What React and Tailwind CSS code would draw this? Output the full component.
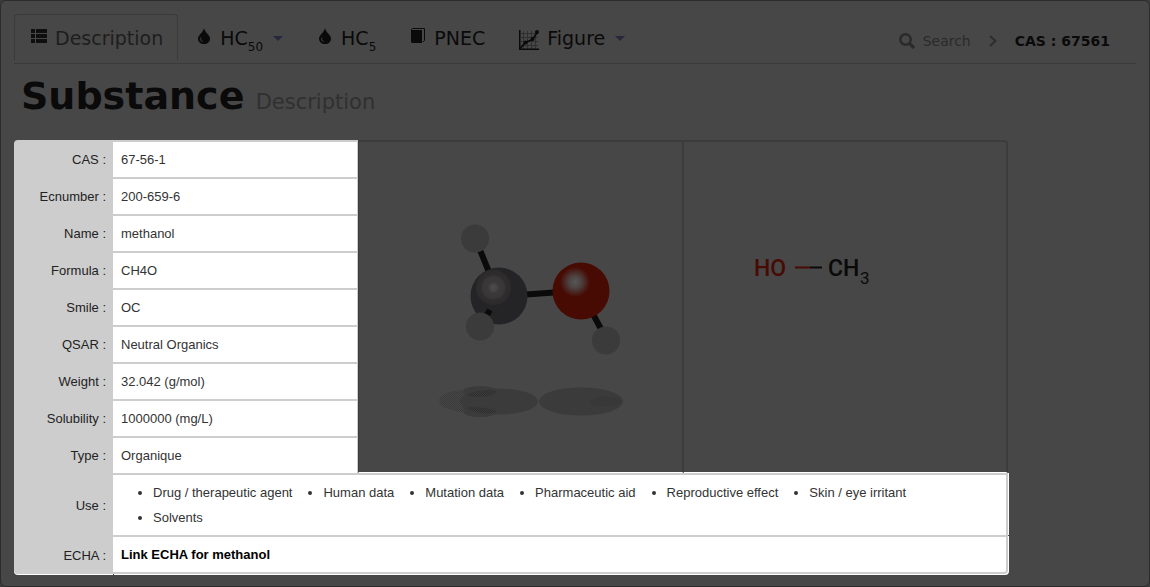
import React from 'react';

const properties = [
  { label: 'CAS', value: '67-56-1' },
  { label: 'Ecnumber', value: '200-659-6' },
  { label: 'Name', value: 'methanol' },
  { label: 'Formula', value: 'CH4O' },
  { label: 'Smile', value: 'OC' },
  { label: 'QSAR', value: 'Neutral Organics' },
  { label: 'Weight', value: '32.042 (g/mol)' },
  { label: 'Solubility', value: '1000000 (mg/L)' },
  { label: 'Type', value: 'Organique' }
];

const uses = [
  'Drug / therapeutic agent',
  'Human data',
  'Mutation data',
  'Pharmaceutic aid',
  'Reproductive effect',
  'Skin / eye irritant',
  'Solvents'
];

const ListIcon = () => (
  <svg className="mb-1 h-4 w-4" viewBox="0 0 16 16" fill="#0f0f0f" aria-hidden="true">
    <path d="M0 1h4v4H0zM5 1h11v4H5zM0 6h4v4H0zM5 6h11v4H5zM0 11h4v4H0zM5 11h11v4H5z" />
  </svg>
);

const DropIcon = () => (
  <svg className="mb-1 h-4 w-4" viewBox="0 0 16 16" fill="currentColor" aria-hidden="true">
    <path d="M8 0c.4 2.200 1.500 3.600 3.200 5.500C13 7.600 14 8.800 14 10.700 14 13.700 11.500 16 8 16s-6-2.300-6-5.300c0-1.900 1-3.100 2.800-5.200C6.500 3.600 7.600 2.200 8 0z" />
    <path d="M5 9.500C4 11.500 4.800 13 6.800 13.600" fill="none" stroke="#474747" strokeWidth="0.900" />
  </svg>
);

const BookIcon = () => (
  <svg className="mb-1 h-4 w-4" viewBox="0 0 16 16" fill="currentColor" aria-hidden="true">
    <path d="M1 2h11v13H2L1 14z" />
    <path d="M1 2L2.500.5h12v12L13 14" fill="none" stroke="currentColor" />
  </svg>
);

const ChartIcon = () => (
  <svg className="mt-1 h-5 w-5" viewBox="0 0 20 20" aria-hidden="true">
    <path d="M4.500 1v18M8.500 1v18M12.500 1v18M16.500 1v18M2 3.500h17M2 7.500h17M2 11.500h17M2 15.500h17" stroke="#303030" fill="none" />
    <path d="M.75 0v19.250H20" stroke="#0a0a0a" strokeWidth="1.500" fill="none" />
    <path d="M1 18.500L6.500 12.500 13.500 9.500 18.500 2" stroke="#0a0a0a" strokeWidth="1.800" fill="none" />
    <circle cx="6.500" cy="12.500" r="2" fill="#0a0a0a" />
    <circle cx="13.500" cy="9" r="2" fill="#0a0a0a" />
    <circle cx="18" cy="2" r="2" fill="#0a0a0a" />
  </svg>
);

const Caret = () => (
  <svg className="ml-0.5 h-[5px] w-2.5" viewBox="0 0 10 5" fill="#28283c" aria-hidden="true">
    <path d="M0 0h10L5 5z" />
  </svg>
);

const SearchIcon = () => (
  <svg className="h-4 w-4" viewBox="0 0 16 16" fill="none" stroke="currentColor" aria-hidden="true">
    <circle cx="6.500" cy="6.500" r="5.200" strokeWidth="2.500" />
    <path d="M10.200 10.200l4.800 4.800" strokeWidth="3.200" />
  </svg>
);

const NavItem = ({ icon, children, active, caret }) => (
  <li>
    <a
      href="#"
      className={
        active
          ? 'flex h-[46px] items-center gap-2 rounded-t border border-b-0 border-[#3a3a3a] pt-px pr-3.5 pl-4 text-[#1e1e1e]'
          : 'flex h-[46px] items-center gap-2 border border-b-0 border-transparent px-[15px] pt-px text-[#0a0a0a]'
      }
    >
      {icon}
      <span>{children}</span>
      {caret && <Caret />}
    </a>
  </li>
);

const Sub = ({ children }) => <sub className="bottom-[-6px] text-xs">{children}</sub>;

const Molecule3D = () => (
  <svg className="h-[330px] w-full" viewBox="359 142 323 330" role="img" aria-label="Methanol 3D model">
    <defs>
      <radialGradient id="carbon">
        <stop offset="0" stopColor="#4c4c4c" />
        <stop offset="0.2" stopColor="#464545" />
        <stop offset="0.3" stopColor="#3b3a3a" />
        <stop offset="0.6" stopColor="#383637" />
        <stop offset="0.7" stopColor="#302d2e" />
        <stop offset="0.95" stopColor="#2d2a2b" />
        <stop offset="1" stopColor="#242326" />
      </radialGradient>
      <radialGradient id="oxygen">
        <stop offset="0" stopColor="#565656" />
        <stop offset="0.4" stopColor="#4d4342" />
        <stop offset="1" stopColor="#470b04" />
      </radialGradient>
      <pattern id="dots" width="2" height="2" patternUnits="userSpaceOnUse">
        <path d="M0 0h1v1H0zM1 1h1v1H1z" fill="#302d2e" />
      </pattern>
      <pattern id="softDots" width="2" height="2" patternUnits="userSpaceOnUse">
        <path d="M0 0h1v1H0zM1 1h1v1H1z" fill="#3a3a3a" />
      </pattern>
    </defs>

    {/* shadows on the floor */}
    <ellipse cx="466" cy="401" rx="27" ry="11" fill="url(#softDots)" />
    <g fill="#3b3b3b">
      <ellipse cx="499" cy="401.500" rx="39" ry="13" />
      <ellipse cx="480" cy="391.500" rx="17" ry="5.500" />
      <ellipse cx="480" cy="411.500" rx="17" ry="5.500" />
      <ellipse cx="581" cy="401.500" rx="42" ry="14" />
    </g>
    <path d="M466 395c8-4 20-6 31-4 0 5-20 8-31 4zM466 408c8-2 20-1 31 3-3 4-22 3-31-3z" fill="url(#dots)" />
    <ellipse cx="606" cy="401.500" rx="16" ry="5" fill="url(#dots)" opacity="0.5" />

    <g stroke="#0a0a0a" strokeWidth="6">
      <path d="M480 250l9 22" />
      <path d="M526 294.500l28-2" />
      <path d="M593 314l8 15" />
    </g>
    <circle cx="499" cy="296" r="28.500" fill="#242326" />
    <circle cx="493.500" cy="287.500" r="18" fill="url(#carbon)" />
    <path d="M485 318l5-8" stroke="#0a0a0a" strokeWidth="6" />
    <circle cx="581" cy="291" r="28.500" fill="#470b04" />
    <circle cx="575" cy="282" r="15" fill="url(#oxygen)" />
    <g fill="#3b3b3b">
      <circle cx="475" cy="238.500" r="14" />
      <circle cx="480" cy="326.500" r="14" />
      <circle cx="606" cy="340.500" r="14" />
    </g>
  </svg>
);

const Structure2D = () => (
  <svg className="h-[330px] w-full font-[Roboto,sans-serif]" viewBox="684 142 322 330" role="img" aria-label="Methanol structure">
    <text x="754" y="276" fontSize="23" fill="#470b04" fontWeight="500">HO</text>
    <path d="M795 267.500h15" stroke="#470b04" strokeWidth="2" />
    <path d="M810 267.500h12" stroke="#0a0a0a" strokeWidth="2" />
    <text x="828" y="276" fontSize="23" fill="#0a0a0a" fontWeight="500">CH</text>
    <text x="860" y="284" fontSize="17" fill="#0a0a0a">3</text>
  </svg>
);

const labelClass = 'bg-[#cdcdcd] pt-0.5 pr-[7px] text-right font-normal text-[#222]';

const SubstanceTable = () => (
  <table className="w-full max-w-[994px] table-fixed border-separate border-spacing-0 font-['Liberation_Sans',Arial,sans-serif] text-[13px] leading-[25px] text-[#333]">
    <colgroup>
      <col className="w-[99px]" />
      <col className="w-[245px]" />
      <col className="w-[326px]" />
      <col />
    </colgroup>
    <tbody>
      {properties.map((item, index) => (
        <tr key={item.label} className="h-[37px]">
          <th scope="row" className={index === 0 ? `${labelClass} rounded-tl` : labelClass}>
            {item.label} :
          </th>
          <td className="border-t-2 border-r border-[#cdcdcd] bg-white pl-2">{item.value}</td>
          {index === 0 && (
            <>
              <td
                rowSpan={properties.length}
                className="border-t-2 border-r-2 border-b border-l border-[#3c3c3c] border-b-white p-0"
              >
                <Molecule3D />
              </td>
              <td
                rowSpan={properties.length}
                className="rounded-tr border-t-2 border-r-2 border-b border-[#3c3c3c] border-b-white p-0"
              >
                <Structure2D />
              </td>
            </>
          )}
        </tr>
      ))}
      <tr>
        <th scope="row" className={labelClass}>Use :</th>
        <td
          colSpan={3}
          className="border-t-2 border-r-2 border-[#cdcdcd] bg-white py-[5px] pr-2 pl-2 shadow-[1px_0_0_#fff]"
        >
          <ul className="flex list-disc flex-wrap gap-x-[31px] pr-4 pl-8">
            {uses.map((use) => (
              <li key={use}>{use}</li>
            ))}
          </ul>
        </td>
      </tr>
      <tr className="h-[39px] bg-white">
        <th scope="row" className={`${labelClass} rounded-bl shadow-[0_1px_0_#fff]`}>ECHA :</th>
        <td
          colSpan={3}
          className="rounded-br border-t-2 border-r-2 border-b-2 border-[#cdcdcd] bg-white pl-2 shadow-[1px_1px_0_#fff]"
        >
          <a href="#" className="font-bold text-black">Link ECHA for methanol</a>
        </td>
      </tr>
    </tbody>
  </table>
);

const App = () => {
  return (
    <div className="bg-[#3c3c3c] font-['DejaVu_Sans',Verdana,sans-serif]">
      <div className="rounded-md border border-[#2c2c2c] bg-[#474747] px-[13px] pt-[13px] pb-3">
        <header className="flex items-center justify-between border-b border-[#3a3a3a] pb-[3px]">
          <nav>
            <ul className="flex gap-0.5 text-[19px]">
              <NavItem icon={<ListIcon />} active>Description</NavItem>
              <NavItem icon={<DropIcon />} caret>HC<Sub>50</Sub></NavItem>
              <NavItem icon={<DropIcon />}>HC<Sub>5</Sub></NavItem>
              <NavItem icon={<BookIcon />}>PNEC</NavItem>
              <NavItem icon={<ChartIcon />} caret>Figure</NavItem>
            </ul>
          </nav>
          <nav aria-label="Breadcrumb" className="flex items-center pt-2 pr-[26px] text-sm">
            <a href="#" className="flex items-center gap-2 text-[#2a2a2a]">
              <SearchIcon />
              Search
            </a>
            <svg className="mx-[18px] h-3 w-2" viewBox="0 0 8 12" fill="none" stroke="#2c2c2c" strokeWidth="1.800" aria-hidden="true">
              <path d="M1 1l5.500 5L1 11" />
            </svg>
            <span className="font-bold text-[#0a0a0a]">CAS : 67561</span>
          </nav>
        </header>

        <h1 className="mt-3 mb-[18px] pl-[7px] text-[38px] leading-10 font-bold text-[#0a0a0a]">
          Substance <small className="-ml-0.5 text-[21px] font-normal text-[#303030]">Description</small>
        </h1>

        <SubstanceTable />
      </div>
    </div>
  );
};

export default App;
